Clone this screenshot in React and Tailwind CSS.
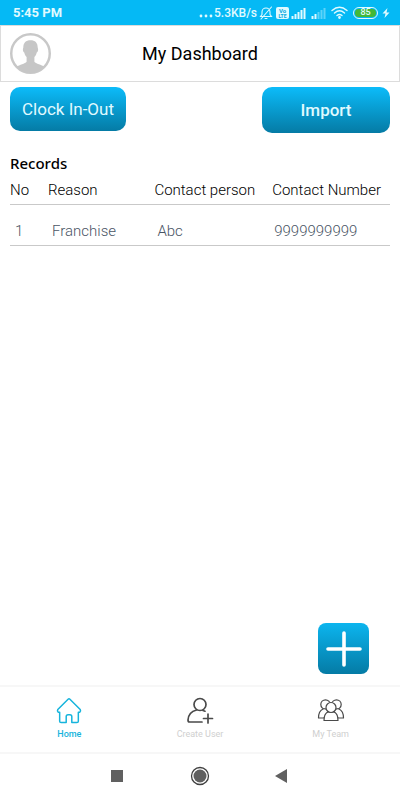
const records = [
  { no: 1, reason: 'Franchise', person: 'Abc', number: '9999999999' },
]

const thCls = 'pb-1 text-[15px] leading-5 font-light text-black whitespace-nowrap'
const tdCls = 'pt-4 pb-1 text-[15px] leading-5 font-light text-gray-600 whitespace-nowrap'
const tabCls = 'flex flex-1 flex-col items-center text-[9px] leading-3'

function SignalIcon({ bars }) {
  return (
    <svg width="16" height="12" viewBox="0 0 16 12" fill="#e0faff">
      {[0, 1, 2, 3, 4].map(i => (
        <rect key={i} x={i * 3 + 0.5} y={9 - i * 2} width="2" height={3 + i * 2} opacity={i < bars ? 1 : 0.4} />
      ))}
    </svg>
  )
}

function StatusBar() {
  return (
    <div className="flex h-[25px] items-center justify-between bg-[#05b9f5] pr-[10px] pl-[13px] text-xs text-[#e0faff]">
      <span className="text-[13px] font-bold">5:45 PM</span>
      <div className="flex items-center">
        <svg width="15" height="12" viewBox="0 0 15 12" fill="#e0faff">
          <circle cx="2" cy="9" r="1.400" />
          <circle cx="7" cy="9" r="1.400" />
          <circle cx="12" cy="9" r="1.400" />
        </svg>
        <span className="font-medium">5.3KB/s</span>
        <svg className="ml-[2px]" width="14" height="14" viewBox="0 0 14 14" fill="none" stroke="#e0faff" strokeWidth="1.100" strokeLinecap="round">
          <path d="M1.500 10.500h11L11 8.500V6a4 4 0 0 0-8 0v2.500zM6 12.500h2M12.500 1 2 13" />
        </svg>
        <svg className="ml-[3px]" width="13" height="12" viewBox="0 0 13 12">
          <rect width="13" height="12" rx="2" fill="#e0faff" />
          <text x="6.500" y="6" fontSize="6" fontWeight="700" textAnchor="middle" fill="#05a9e0" fontFamily="Roboto">Vo</text>
          <text x="6.500" y="11" fontSize="5" fontWeight="700" textAnchor="middle" fill="#05a9e0" fontFamily="Roboto">LTE</text>
        </svg>
        <div className="ml-[2px] flex gap-1">
          <SignalIcon bars={5} />
          <SignalIcon bars={2} />
        </div>
        <svg className="ml-1" width="17" height="13" viewBox="0 0 17 13" fill="none" stroke="#e0faff" strokeWidth="1.400" strokeLinecap="round">
          <path d="M1 4.500Q8.500-2 16 4.500M3.500 7Q8.500 2.700 13.500 7M6 9.500q2.500-2 5 0" />
          <circle cx="8.500" cy="11.500" r="0.700" fill="#e0faff" />
        </svg>
        <div className="ml-[5px] flex h-3 w-[25px] rounded-full border border-[#e0faff] p-px">
          <span className="flex flex-1 items-center justify-center rounded-full bg-[#43b838] text-[9px] leading-none font-medium">85</span>
        </div>
        <svg className="ml-1" width="8" height="12" viewBox="0 0 8 12" fill="#e0faff">
          <path d="M5.500 1 0.500 6.500h3L2.500 11 7.500 5.500h-3z" />
        </svg>
      </div>
    </div>
  )
}

function Avatar() {
  return (
    <svg width="41" height="41" viewBox="0 0 40 40" aria-label="Profile">
      <circle cx="20" cy="20" r="18.800" fill="white" stroke="#c8c8c8" strokeWidth="2.400" />
      <path fill="#c6c6c6" d="M20 7c-4.500 0-7 2.500-7 7 0 1-.5 1-.4 2.500.1 1.500.8 2.300 1.300 2.500.5 2.200 1.300 3.500 2.300 4.500V28c-1.200 2-7.200 2.800-9.700 5a18 18 0 0 0 27 0c-2.500-2.200-8.500-3-9.700-5v-4.500c1-1 1.800-2.300 2.300-4.500.5-.2 1.200-1 1.300-2.500.1-1.500-.4-1.500-.4-2.500 0-4.500-2.500-7-7-7z" />
    </svg>
  )
}

function HomeIcon() {
  return (
    <svg width="28" height="28" viewBox="-1 -2 30 30" fill="none" stroke="#16b4dc" strokeWidth="1.600" strokeLinejoin="round">
      <path d="M13 1.500q1-1 2 0L26 12.500q1 1.500-.5 3H24V25q0 1.500-1.500 1.500H17V20q0-2-2-2h-2q-2 0-2 2v6.500H5.500Q4 26.500 4 25v-9.500H2.500q-1.500-1.500-.5-3z" />
    </svg>
  )
}

function CreateUserIcon() {
  return (
    <svg width="28" height="28" viewBox="0 -1 28 28" fill="none" stroke="#4a4a4a" strokeWidth="1.700" strokeLinecap="round" strokeLinejoin="round">
      <circle cx="14" cy="7.500" r="6" />
      <path d="M10.500 13Q2.500 15 2 23q0 2 1.500 2H16M17 13.500l2 .7M22 17v9M17.500 21.500h9" />
    </svg>
  )
}

function TeamIcon() {
  return (
    <svg width="28" height="28" viewBox="0 -1 28 28" fill="white" stroke="#4a4a4a" strokeWidth="1.200" strokeLinejoin="round">
      <circle cx="8.500" cy="7.500" r="4.700" />
      <circle cx="19.500" cy="7.500" r="4.700" />
      <path d="M7 21H1.500q0-7 4.500-9 3-1 5 2zM21 21h5.500q0-7-4.500-9-3-1-5 2z" />
      <path d="M7 23.500q0-7 4-8.500h6q4 1.500 4 8.500z" />
      <circle cx="14" cy="10.500" r="5" />
    </svg>
  )
}

function App() {
  return (
    <div className="flex min-h-screen flex-col bg-white font-[Roboto,sans-serif]">
      <StatusBar />

      <header className="grid h-[57px] grid-cols-[1fr_auto_1fr] items-center border border-[#dcdcdc] px-[9px]">
        <Avatar />
        <h1 className="text-lg leading-6 text-black">My Dashboard</h1>
      </header>

      <main className="flex flex-1 flex-col px-[10px] pt-[5px]">
        <div className="flex items-start justify-between">
          <button className="h-11 w-[116px] rounded-[10px] bg-linear-to-b from-[#0cbcfa] to-[#057ba5] pt-[2px] text-[17px] text-[#e0faff]">Clock In-Out</button>
          <button className="h-[46px] w-32 rounded-[10px] bg-linear-to-b from-[#0cbcfa] to-[#057ba5] pt-[2px] text-[17px] font-medium text-[#e0faff]">Import</button>
        </div>

        <h2 className="mt-[18px] font-['Noto_Sans',sans-serif] text-[15px] leading-6 font-medium text-black">Records</h2>
        <table className="mt-[5px] w-full table-fixed border-collapse text-left">
          <thead>
            <tr className="border-b border-[#c9c9c9]">
              <th className={`w-[10%] ${thCls}`}>No</th>
              <th className={`w-[28%] ${thCls}`}>Reason</th>
              <th className={`w-[31%] ${thCls}`}>Contact person</th>
              <th className={`w-[31%] ${thCls}`}>Contact Number</th>
            </tr>
          </thead>
          <tbody>
            {records.map(r => (
              <tr key={r.no} className="border-b border-[#c9c9c9]">
                <td className={`pl-[5px] ${tdCls}`}>{r.no}</td>
                <td className={`pl-1 ${tdCls}`}>{r.reason}</td>
                <td className={`pl-[3px] ${tdCls}`}>{r.person}</td>
                <td className={`pl-[2px] ${tdCls}`}>{r.number}</td>
              </tr>
            ))}
          </tbody>
        </table>

        <button aria-label="Add record" className="mt-auto mr-[21px] mb-[11px] flex size-[51px] items-center justify-center self-end rounded-lg bg-linear-to-b from-[#0cb5ef] to-[#057ba5]">
          <svg width="36" height="36" viewBox="0 0 36 36" stroke="white" strokeWidth="3.600" strokeLinecap="round">
            <path d="M18 2v32M2 18h32" />
          </svg>
        </button>
      </main>

      <nav className="flex h-[67px] border-t-2 border-[#f7f7f7] px-1 pt-[9px]">
        <button className={`${tabCls} text-[#16b4dc]`}>
          <HomeIcon />
          <span className="mt-1 font-medium">Home</span>
        </button>
        <button className={`${tabCls} text-[#cfcfcf]`}>
          <CreateUserIcon />
          <span className="mt-1">Create User</span>
        </button>
        <button className={`${tabCls} text-[#cfcfcf]`}>
          <TeamIcon />
          <span className="mt-1">My Team</span>
        </button>
      </nav>

      <div className="flex h-12 items-center justify-center gap-[63px] border-t-2 border-[#f7f7f7] pb-[2px]">
        <button aria-label="Recent apps">
          <svg width="20" height="20" viewBox="0 0 20 20"><rect x="4" y="4" width="12" height="12" fill="#606060" /></svg>
        </button>
        <button aria-label="Home screen">
          <svg width="20" height="20" viewBox="0 0 20 20" fill="#606060">
            <circle cx="10" cy="10" r="8.500" fill="none" stroke="#404040" strokeWidth="1.300" />
            <circle cx="10" cy="10" r="6.500" />
          </svg>
        </button>
        <button aria-label="Back">
          <svg width="20" height="20" viewBox="0 0 20 20"><path d="M2 10 14 3v14z" fill="#606060" /></svg>
        </button>
      </div>
    </div>
  )
}

export default App
